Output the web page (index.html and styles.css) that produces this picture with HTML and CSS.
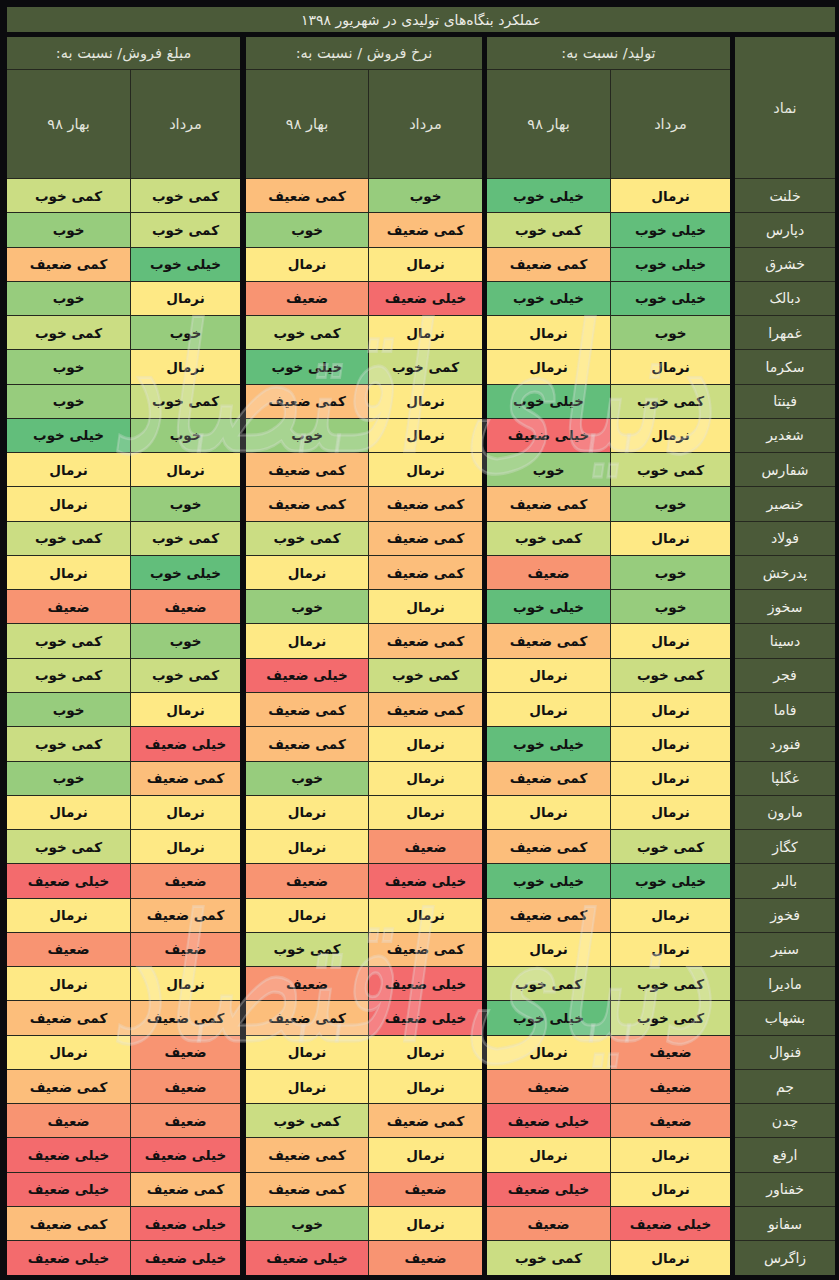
FILE: index.html
```html
<!DOCTYPE html>
<html lang="fa" dir="rtl">
<head>
<meta charset="utf-8">
<title>عملکرد بنگاه‌های تولیدی در شهریور ۱۳۹۸</title>
<link rel="stylesheet" href="styles.css">
</head>
<body>
<div class="sheet">
  <div class="title">عملکرد بنگاه‌های تولیدی در شهریور ۱۳۹۸</div>
  <div class="grid">
    <div class="sep s1"></div>
    <div class="sep s2"></div>
    <div class="sep s3"></div>

    <div class="h sym-h">نماد</div>
    <div class="h grp">تولید/ نسبت به:</div>
    <div class="h grp">نرخ فروش / نسبت به:</div>
    <div class="h grp">مبلغ فروش/ نسبت به:</div>
    <div class="h sub">مرداد</div><div class="h sub">بهار ۹۸</div>
    <div class="h sub">مرداد</div><div class="h sub">بهار ۹۸</div>
    <div class="h sub">مرداد</div><div class="h sub">بهار ۹۸</div>

    <div class="sym">خلنت</div><div class="c n">نرمال</div><div class="c g3">خیلی خوب</div><div class="c g2">خوب</div><div class="c r1">کمی ضعیف</div><div class="c g1">کمی خوب</div><div class="c g1">کمی خوب</div>
    <div class="sym">دپارس</div><div class="c g3">خیلی خوب</div><div class="c g1">کمی خوب</div><div class="c r1">کمی ضعیف</div><div class="c g2">خوب</div><div class="c g1">کمی خوب</div><div class="c g2">خوب</div>
    <div class="sym">خشرق</div><div class="c g3">خیلی خوب</div><div class="c r1">کمی ضعیف</div><div class="c n">نرمال</div><div class="c n">نرمال</div><div class="c g3">خیلی خوب</div><div class="c r1">کمی ضعیف</div>
    <div class="sym">دبالک</div><div class="c g3">خیلی خوب</div><div class="c g3">خیلی خوب</div><div class="c r3">خیلی ضعیف</div><div class="c r2">ضعیف</div><div class="c n">نرمال</div><div class="c g2">خوب</div>
    <div class="sym">غمهرا</div><div class="c g2">خوب</div><div class="c n">نرمال</div><div class="c n">نرمال</div><div class="c g1">کمی خوب</div><div class="c g2">خوب</div><div class="c g1">کمی خوب</div>
    <div class="sym">سکرما</div><div class="c n">نرمال</div><div class="c n">نرمال</div><div class="c g1">کمی خوب</div><div class="c g3">خیلی خوب</div><div class="c n">نرمال</div><div class="c g2">خوب</div>
    <div class="sym">فپنتا</div><div class="c g1">کمی خوب</div><div class="c g3">خیلی خوب</div><div class="c n">نرمال</div><div class="c r1">کمی ضعیف</div><div class="c g1">کمی خوب</div><div class="c g2">خوب</div>
    <div class="sym">شغدیر</div><div class="c n">نرمال</div><div class="c r3">خیلی ضعیف</div><div class="c n">نرمال</div><div class="c g2">خوب</div><div class="c g2">خوب</div><div class="c g3">خیلی خوب</div>
    <div class="sym">شفارس</div><div class="c g1">کمی خوب</div><div class="c g2">خوب</div><div class="c n">نرمال</div><div class="c r1">کمی ضعیف</div><div class="c n">نرمال</div><div class="c n">نرمال</div>
    <div class="sym">خنصیر</div><div class="c g2">خوب</div><div class="c r1">کمی ضعیف</div><div class="c r1">کمی ضعیف</div><div class="c r1">کمی ضعیف</div><div class="c g2">خوب</div><div class="c n">نرمال</div>
    <div class="sym">فولاد</div><div class="c n">نرمال</div><div class="c g1">کمی خوب</div><div class="c r1">کمی ضعیف</div><div class="c g1">کمی خوب</div><div class="c g1">کمی خوب</div><div class="c g1">کمی خوب</div>
    <div class="sym">پدرخش</div><div class="c g2">خوب</div><div class="c r2">ضعیف</div><div class="c r1">کمی ضعیف</div><div class="c n">نرمال</div><div class="c g3">خیلی خوب</div><div class="c n">نرمال</div>
    <div class="sym">سخوز</div><div class="c g2">خوب</div><div class="c g3">خیلی خوب</div><div class="c n">نرمال</div><div class="c g2">خوب</div><div class="c r2">ضعیف</div><div class="c r2">ضعیف</div>
    <div class="sym">دسینا</div><div class="c n">نرمال</div><div class="c r1">کمی ضعیف</div><div class="c r1">کمی ضعیف</div><div class="c n">نرمال</div><div class="c g2">خوب</div><div class="c g1">کمی خوب</div>
    <div class="sym">فجر</div><div class="c g1">کمی خوب</div><div class="c n">نرمال</div><div class="c g1">کمی خوب</div><div class="c r3">خیلی ضعیف</div><div class="c g1">کمی خوب</div><div class="c g1">کمی خوب</div>
    <div class="sym">فاما</div><div class="c n">نرمال</div><div class="c n">نرمال</div><div class="c r1">کمی ضعیف</div><div class="c r1">کمی ضعیف</div><div class="c n">نرمال</div><div class="c g2">خوب</div>
    <div class="sym">فنورد</div><div class="c n">نرمال</div><div class="c g3">خیلی خوب</div><div class="c n">نرمال</div><div class="c r1">کمی ضعیف</div><div class="c r3">خیلی ضعیف</div><div class="c g1">کمی خوب</div>
    <div class="sym">غگلپا</div><div class="c n">نرمال</div><div class="c r1">کمی ضعیف</div><div class="c n">نرمال</div><div class="c g2">خوب</div><div class="c r1">کمی ضعیف</div><div class="c g2">خوب</div>
    <div class="sym">مارون</div><div class="c n">نرمال</div><div class="c n">نرمال</div><div class="c n">نرمال</div><div class="c n">نرمال</div><div class="c n">نرمال</div><div class="c n">نرمال</div>
    <div class="sym">کگاز</div><div class="c g1">کمی خوب</div><div class="c r1">کمی ضعیف</div><div class="c r2">ضعیف</div><div class="c n">نرمال</div><div class="c n">نرمال</div><div class="c g1">کمی خوب</div>
    <div class="sym">بالبر</div><div class="c g3">خیلی خوب</div><div class="c g3">خیلی خوب</div><div class="c r3">خیلی ضعیف</div><div class="c r2">ضعیف</div><div class="c r2">ضعیف</div><div class="c r3">خیلی ضعیف</div>
    <div class="sym">فخوز</div><div class="c n">نرمال</div><div class="c r1">کمی ضعیف</div><div class="c n">نرمال</div><div class="c n">نرمال</div><div class="c r1">کمی ضعیف</div><div class="c n">نرمال</div>
    <div class="sym">سنیر</div><div class="c n">نرمال</div><div class="c n">نرمال</div><div class="c r1">کمی ضعیف</div><div class="c g1">کمی خوب</div><div class="c r2">ضعیف</div><div class="c r2">ضعیف</div>
    <div class="sym">مادیرا</div><div class="c g1">کمی خوب</div><div class="c g1">کمی خوب</div><div class="c r3">خیلی ضعیف</div><div class="c r2">ضعیف</div><div class="c n">نرمال</div><div class="c n">نرمال</div>
    <div class="sym">بشهاب</div><div class="c g1">کمی خوب</div><div class="c g3">خیلی خوب</div><div class="c r3">خیلی ضعیف</div><div class="c r1">کمی ضعیف</div><div class="c r1">کمی ضعیف</div><div class="c r1">کمی ضعیف</div>
    <div class="sym">فنوال</div><div class="c r2">ضعیف</div><div class="c n">نرمال</div><div class="c n">نرمال</div><div class="c n">نرمال</div><div class="c r2">ضعیف</div><div class="c n">نرمال</div>
    <div class="sym">جم</div><div class="c r2">ضعیف</div><div class="c r2">ضعیف</div><div class="c n">نرمال</div><div class="c n">نرمال</div><div class="c r2">ضعیف</div><div class="c r1">کمی ضعیف</div>
    <div class="sym">چدن</div><div class="c r2">ضعیف</div><div class="c r3">خیلی ضعیف</div><div class="c r1">کمی ضعیف</div><div class="c g1">کمی خوب</div><div class="c r2">ضعیف</div><div class="c r2">ضعیف</div>
    <div class="sym">ارفع</div><div class="c n">نرمال</div><div class="c n">نرمال</div><div class="c n">نرمال</div><div class="c r1">کمی ضعیف</div><div class="c r3">خیلی ضعیف</div><div class="c r3">خیلی ضعیف</div>
    <div class="sym">خفناور</div><div class="c n">نرمال</div><div class="c r3">خیلی ضعیف</div><div class="c r2">ضعیف</div><div class="c r1">کمی ضعیف</div><div class="c r1">کمی ضعیف</div><div class="c r3">خیلی ضعیف</div>
    <div class="sym">سفانو</div><div class="c r3">خیلی ضعیف</div><div class="c r2">ضعیف</div><div class="c n">نرمال</div><div class="c g2">خوب</div><div class="c r3">خیلی ضعیف</div><div class="c r1">کمی ضعیف</div>
    <div class="sym">زاگرس</div><div class="c n">نرمال</div><div class="c g1">کمی خوب</div><div class="c r2">ضعیف</div><div class="c r3">خیلی ضعیف</div><div class="c r3">خیلی ضعیف</div><div class="c r3">خیلی ضعیف</div>
  </div>
  <div class="wm wm1">دنیای اقتصاد</div>
  <div class="wm wm2">دنیای اقتصاد</div>
</div>
</body>
</html>
```

FILE: styles.css
```css
html, body {
  margin: 0;
  padding: 0;
  background: #0b0b0e;
}

.sheet {
  position: relative;
  width: 839px;
  height: 1280px;
  box-sizing: border-box;
  padding: 7px 4px 5px 7px;
  background: #0b0b0e;
  font-family: "DejaVu Sans", sans-serif;
  overflow: hidden;
}

.title {
  height: 25px;
  margin-bottom: 5px;
  background: #4b5a39;
  color: #ecece6;
  font-size: 14px;
  display: flex;
  align-items: center;
  justify-content: center;
}

.grid {
  display: grid;
  direction: rtl;
  grid-template-columns: 100px 3px 119px 123px 3px 113px 122px 4px 109px 123px;
  grid-template-rows: 32px 108px repeat(32, 33.28px);
  gap: 1px;
  background: #25281f;
}

.sep {
  grid-row: 1 / -1;
  background: #0b0b0e;
  margin: 0 -1px;
}
.s1 { grid-column: 2; }
.s2 { grid-column: 5; }
.s3 { grid-column: 8; }

.h {
  background: #4b5a39;
  color: #e4e6df;
  font-size: 14.5px;
  display: flex;
  align-items: center;
  justify-content: center;
}

.sym-h { grid-row: span 2; }
.grp { grid-column: span 2; }

.sym {
  background: #4b5a39;
  color: #f0f0ea;
  font-size: 14px;
  display: flex;
  align-items: center;
  justify-content: center;
}

.c {
  display: flex;
  align-items: center;
  justify-content: center;
  color: #111;
  font-weight: bold;
  font-size: 13.5px;
}

.g3 { background: #62be7b; }
.g2 { background: #97cc7d; }
.g1 { background: #cbdd83; }
.n  { background: #fee985; }
.r1 { background: #fcbe7b; }
.r2 { background: #f89472; }
.r3 { background: #f36b6d; }

.wm {
  position: absolute;
  left: 100px;
  width: 640px;
  text-align: center;
  direction: rtl;
  font-family: "DejaVu Serif", serif;
  font-size: 118px;
  line-height: 1;
  color: rgba(255, 255, 255, 0.16);
  -webkit-text-stroke: 2px rgba(225, 225, 225, 0.3);
  pointer-events: none;
  transform: skewX(-8deg) scaleY(1.5);
}
.wm1 { top: 330px; }
.wm2 { top: 920px; }
```
